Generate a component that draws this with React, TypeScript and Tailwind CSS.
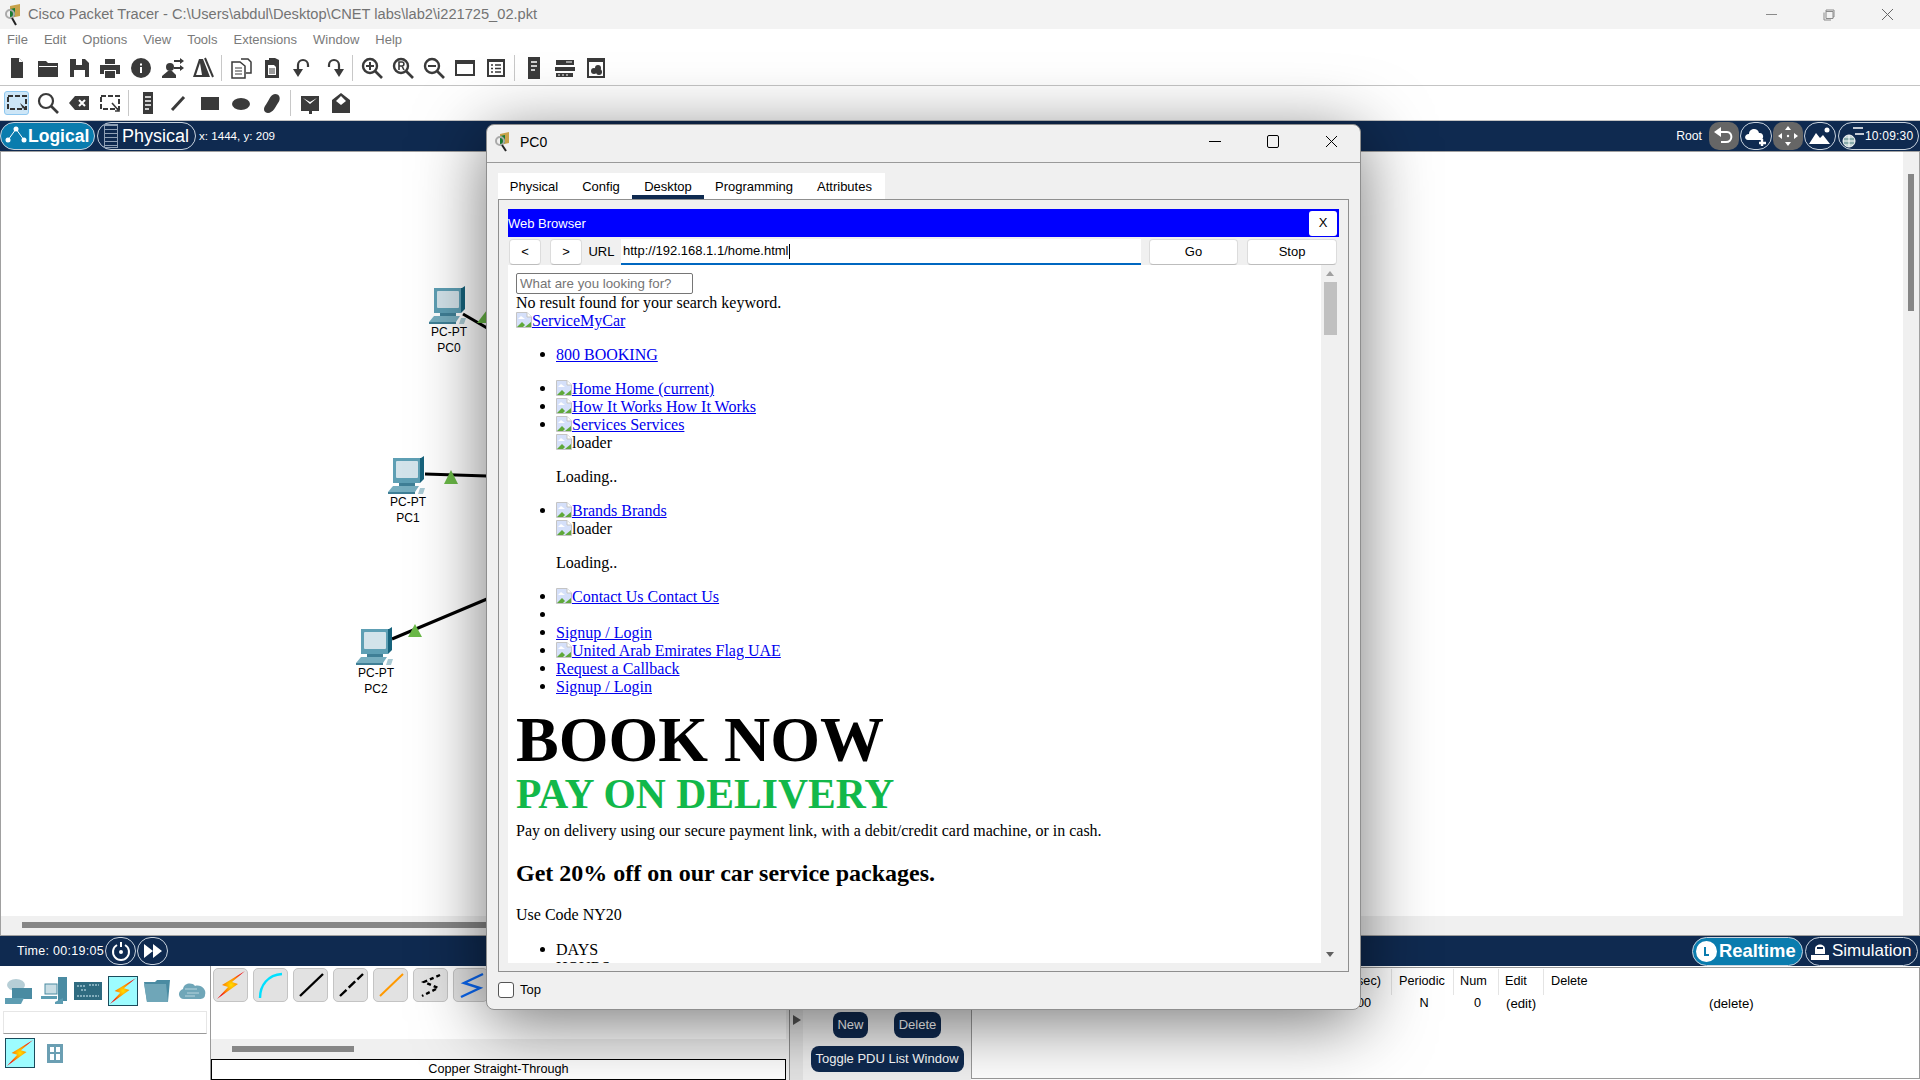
import React from 'react';

const NAVY = 'bg-[#0f2a50]';

// broken image marker, same as the browser draws
const Broken = () => (
    <svg width="16" height="16" viewBox="0 0 16 16" className="inline-block align-[-2px]">
        <path d="M0.5 0.5H11L15.5 5V15.5H0.5Z" fill="#d5e0fa" stroke="#c4c4c4" />
        <path d="M11 0.5V5H15.5" fill="#fff" stroke="#c4c4c4" />
        <path d="M1 15L6 10L9 13L7 15Z" fill="#5fa83a" />
        <path d="M9 15L15 10V15Z" fill="#5fa83a" />
        <path d="M2 7L5 4L9 7Z" fill="#fff" />
    </svg>
);

const A = ({ children }: { children: React.ReactNode }) => (
    <a className="text-[#0000ee] underline">{children}</a>
);

const Li = ({ children }: { children: React.ReactNode }) => (
    <li className="relative h-[18px] whitespace-nowrap">
        <span className="absolute left-[-16px] top-[6px] w-[5px] h-[5px] rounded-full bg-black" />
        {children}
    </li>
);

const ToolIcon = ({ children, vb = '0 0 24 24' }: { children: React.ReactNode; vb?: string }) => (
    <div className="w-[31px] flex justify-center shrink-0">
        <svg width="24" height="24" viewBox={vb} fill="#3a3a3a">
            {children}
        </svg>
    </div>
);

const Sep = () => <div className="w-px h-[26px] bg-[#c8c8c8] mx-[3px] shrink-0" />;

const Bolt = ({ size = 30 }: { size?: number }) => (
    <svg width={size} height={size} viewBox="0 0 30 30">
        <defs>
            <radialGradient id="boltFill" cx="50%" cy="50%" r="50%">
                <stop offset="0%" stopColor="#ffe000" />
                <stop offset="60%" stopColor="#ff7a00" />
                <stop offset="100%" stopColor="#f01010" />
            </radialGradient>
        </defs>
        <path d="M29 1L16 12L22 14L1 29L12 17L6 15Z" fill="url(#boltFill)" />
    </svg>
);

const PcIcon = () => (
    <svg width="40" height="40" viewBox="0 0 40 40">
        <path d="M5 2H33L36 0V23L32 27H5Z" fill="#17637c" />
        <path d="M5 2H32V27H5Z" fill="#5e9fb4" />
        <rect x="8" y="5" width="22" height="17" rx="1" fill="#d3e3ea" />
        <path d="M11 27H27V30H11Z" fill="#3f7f96" />
        <path d="M5 30H31L27 36H0Z" fill="#77aebf" />
        <path d="M0 36H27V38H0Z" fill="#3f7f96" />
        <path d="M32 32H37L35 38H30Z" fill="#a8c9d3" />
    </svg>
);

const PcNode = ({ x, y, name }: { x: number; y: number; name: string }) => (
    <div className="absolute flex flex-col items-center w-[60px] text-[12px] leading-[16px] text-black" style={{ left: x, top: y }}>
        <PcIcon />
        <span className="-mt-[2px]">PC-PT</span>
        <span>{name}</span>
    </div>
);

const Links = () => (
    <svg className="absolute left-0 top-0" width="486" height="784">
        <path d="M462 162L486 176" stroke="#000" strokeWidth="3" />
        <path d="M424 322L486 324" stroke="#000" strokeWidth="3" />
        <path d="M391 487L486 447" stroke="#000" strokeWidth="3" />
        <path d="M476 171L486 158L486 171Z" fill="#6ab947" />
        <path d="M443 332L450 318L457 332Z" fill="#6ab947" />
        <path d="M407 485L414 472L421 485Z" fill="#6ab947" />
    </svg>
);

const PillButton = ({ active, children }: { active?: boolean; children: React.ReactNode }) => (
    <div className={`h-[28px] rounded-full border border-[#c9d3de] flex items-center ${active ? 'bg-[#0a7cae]' : ''}`}>{children}</div>
);

const CableBtn = ({ children }: { children: React.ReactNode }) => (
    <div className="w-[35px] h-[34px] rounded-[5px] bg-[#e2e2e2] border border-[#c4c4c4] flex items-center justify-center shrink-0">
        <svg width="30" height="30" viewBox="0 0 30 30">{children}</svg>
    </div>
);

const DevIcon = ({ children, active }: { children: React.ReactNode; active?: boolean }) => (
    <div className={`w-[30px] h-[30px] shrink-0 flex items-center justify-center ${active ? 'bg-[#9dfcff] border border-[#1b4b5c]' : ''}`}>{children}</div>
);

const BrowserBtn = ({ w, children }: { w: string; children: React.ReactNode }) => (
    <div className={`${w} h-[26px] bg-white rounded-[4px] border border-[#dcdcdc] border-b-[#bdbdbd] flex items-center justify-center text-[13px] text-black`}>{children}</div>
);

const WebPage = () => (
    <div className="flex-1 bg-white overflow-hidden h-full pl-[8px] pt-[8px] font-['Liberation_Serif',serif] text-[16px] leading-[18px] text-black">
        <div className="w-[177px] h-[21px] border border-[#767676] rounded-[2px] px-[3px] font-['Liberation_Sans',sans-serif] text-[13.3px] leading-[19px] text-[#757575]">What are you looking for?</div>
        <div>No result found for your search keyword.</div>
        <div><A><Broken />ServiceMyCar</A></div>
        <ul className="pl-[40px] mt-[16px]">
            <Li><A>800 BOOKING</A></Li>
        </ul>
        <ul className="pl-[40px] mt-[16px]">
            <Li><A><Broken />Home Home (current)</A></Li>
            <Li><A><Broken />How It Works How It Works</A></Li>
            <Li><A><Broken />Services Services</A></Li>
            <div><Broken />loader</div>
            <p className="my-[16px]">Loading..</p>
            <Li><A><Broken />Brands Brands</A></Li>
            <div><Broken />loader</div>
            <p className="my-[16px]">Loading..</p>
            <Li><A><Broken />Contact Us Contact Us</A></Li>
            <Li>&nbsp;</Li>
            <Li><A>Signup / Login</A></Li>
            <Li><A><Broken />United Arab Emirates Flag UAE</A></Li>
            <Li><A>Request a Callback</A></Li>
            <Li><A>Signup / Login</A></Li>
        </ul>
        <h1 className="mt-[6px] text-[64px] leading-[76px] font-bold whitespace-nowrap">BOOK NOW</h1>
        <h2 className="-mt-[8px] text-[41.6px] leading-[48px] font-bold text-[#12b84a] whitespace-nowrap">PAY ON DELIVERY</h2>
        <p className="mt-[4px]">Pay on delivery using our secure payment link, with a debit/credit card machine, or in cash.</p>
        <h3 className="mt-[21px] text-[24px] leading-[24px] font-bold">Get 20% off on our car service packages.</h3>
        <p className="mt-[21px]">Use Code NY20</p>
        <ul className="pl-[40px] mt-[17px]">
            <Li>DAYS</Li>
            <Li>HOURS</Li>
        </ul>
    </div>
);

const TABS = [
    ['Physical', 'w-[72px]'],
    ['Config', 'w-[62px]'],
    ['Desktop', 'w-[72px]'],
    ['Programming', 'w-[100px]'],
    ['Attributes', 'w-[81px]'],
];

const PcWindow = () => (
    <div className="absolute left-[486px] top-[124px] w-[875px] h-[886px] bg-[#f0f0f0] rounded-[8px] border border-[#8e8e8e] shadow-[0_12px_70px_rgba(0,0,0,0.55)] flex flex-col">
        <div className="h-[38px] flex items-center border-b border-[#9a9a9a] pl-[8px] pb-[3px] shrink-0">
            <svg width="20" height="22" viewBox="0 0 20 22" className="shrink-0">
                <path d="M5 3L14 1V12L5 14Z" fill="#c8a24a" />
                <path d="M5 5L10 4V12L5 14Z" fill="#1a7a30" />
                <circle cx="5" cy="10" r="4" fill="none" stroke="#aaa" strokeWidth="2" />
                <path d="M7 14L11 20" stroke="#222" strokeWidth="2" />
            </svg>
            <span className="ml-[5px] text-[14px] text-black">PC0</span>
            <div className="ml-auto flex items-center pb-[1px]">
                <div className="w-[58px] flex justify-center"><div className="w-[12px] h-px bg-black" /></div>
                <div className="w-[58px] flex justify-center"><div className="w-[12px] h-[13px] border border-black rounded-[2px]" /></div>
                <div className="w-[58px] flex justify-center">
                    <svg width="13" height="13" viewBox="0 0 13 13"><path d="M1 1L12 12M12 1L1 12" stroke="#000" /></svg>
                </div>
            </div>
        </div>
        <div className="flex-1 px-[11px] pt-[10px] flex flex-col min-h-0">
            <div className="self-start bg-white h-[26px] flex items-stretch text-[13px] text-black">
                {TABS.map(([label, w]) => (
                    <div key={label} className={`${w} flex items-center justify-center ${label === 'Desktop' ? 'border-b-[4px] border-[#0f2a50] pt-[6px]' : 'pt-[2px]'}`}>{label}</div>
                ))}
            </div>
            <div className="h-[773px] border border-[#8f8f8f] px-[9px] pt-[9px] flex flex-col shrink-0">
                <div className="h-[28px] bg-[#0000ff] flex items-center justify-between pr-[2px] shrink-0">
                    <span className="mt-[2px] text-[13px] text-white">Web Browser</span>
                    <div className="w-[28px] h-[25px] bg-white rounded-[3px] flex items-center justify-center text-[13px] text-black">X</div>
                </div>
                <div className="h-[28px] flex items-center pl-[1px] pr-[2px] pt-[2px] shrink-0">
                    <BrowserBtn w="w-[32px]">&lt;</BrowserBtn>
                    <div className="w-[9px]" />
                    <BrowserBtn w="w-[32px]">&gt;</BrowserBtn>
                    <span className="w-[39px] text-center text-[13px] text-black">URL</span>
                    <div className="w-[520px] h-[26px] bg-white border-b-2 border-[#0067c0] flex items-center pl-[2px] text-[13px] text-black">
                        http://192.168.1.1/home.html<span className="w-px h-[15px] bg-black" />
                    </div>
                    <div className="w-[8px]" />
                    <BrowserBtn w="w-[89px]">Go</BrowserBtn>
                    <div className="w-[9px]" />
                    <BrowserBtn w="w-[90px]">Stop</BrowserBtn>
                </div>
                <div className="flex h-[698px] shrink-0">
                    <WebPage />
                    <div className="w-[18px] bg-[#f0f0f0] flex flex-col items-center shrink-0">
                        <div className="mt-[6px] w-0 h-0 border-x-[4px] border-x-transparent border-b-[5px] border-b-[#a0a0a0]" />
                        <div className="mt-[6px] w-[13px] h-[53px] bg-[#c0c0c0]" />
                        <div className="mt-auto mb-[6px] w-0 h-0 border-x-[4px] border-x-transparent border-t-[5px] border-t-[#606060]" />
                    </div>
                </div>
            </div>
            <div className="flex items-center mt-[8px] text-[13px] text-black">
                <div className="w-[16px] h-[16px] border border-[#555] rounded-[3px] bg-white" />
                <span className="ml-[6px]">Top</span>
            </div>
        </div>
    </div>
);

const App = () => {
    return (
        <div className="relative w-[1920px] h-[1080px] overflow-hidden bg-white font-['Liberation_Sans',sans-serif] flex flex-col">
            {/* title */}
            <div className="h-[29px] bg-[#f3f3f3] flex items-center shrink-0 pl-[4px]">
                <svg width="20" height="24" viewBox="0 0 20 24" className="shrink-0">
                    <path d="M6 3L16 1V13L6 15Z" fill="#c8a24a" />
                    <path d="M6 6L11 5V13L6 15Z" fill="#1a7a30" />
                    <circle cx="6" cy="11" r="4" fill="none" stroke="#aaa" strokeWidth="2" />
                    <path d="M8 15L12 22" stroke="#222" strokeWidth="2" />
                </svg>
                <span className="ml-[4px] text-[14.65px] text-[#737373] whitespace-nowrap">Cisco Packet Tracer - C:\Users\abdul\Desktop\CNET labs\lab2\i221725_02.pkt</span>
                <div className="ml-auto flex items-center text-[#8a8a8a] pr-[4px]">
                    <div className="w-[58px] flex justify-center"><div className="w-[11px] h-px bg-[#8a8a8a]" /></div>
                    <div className="w-[58px] flex justify-center">
                        <svg width="12" height="12" viewBox="0 0 12 12" fill="none" stroke="#8a8a8a"><path d="M3 2.5H10V9.5H3ZM3 2.5V1H11V8H10M1 3.5V11H8" /></svg>
                    </div>
                    <div className="w-[58px] flex justify-center">
                        <svg width="13" height="13" viewBox="0 0 13 13"><path d="M1 1L12 12M12 1L1 12" stroke="#666" /></svg>
                    </div>
                </div>
            </div>
            {/* menu */}
            <div className="h-[21px] bg-white flex items-center shrink-0 pl-[7px] gap-[16px] text-[13px] text-[#7a7a7a]">
                {['File', 'Edit', 'Options', 'View', 'Tools', 'Extensions', 'Window', 'Help'].map((m) => (
                    <span key={m}>{m}</span>
                ))}
            </div>
            {/* main toolbar */}
            <div className="h-[36px] bg-white border-b border-[#c4c4c4] flex items-center shrink-0 pl-[1px]">
                <ToolIcon><path d="M6 2H14L18 6V22H6Z" /><path d="M14 2V6H18" fill="#fff" /></ToolIcon>
                <ToolIcon><path d="M2 5H10L12 7H22V21H2ZM3 10V11H21V10Z" fillRule="evenodd" /></ToolIcon>
                <ToolIcon><path d="M3 3H18L22 7V21H3ZM9 3V9H15V3ZM7 14V21H18V14Z" fillRule="evenodd" /></ToolIcon>
                <ToolIcon><path d="M7 3H17V8H7ZM2 9H22V18H18V14H6V18H2ZM7 15H17V22H7Z" /></ToolIcon>
                <ToolIcon><circle cx="12" cy="12" r="10" /><rect x="11" y="11" width="2" height="6" fill="#fff" /><rect x="11" y="7.5" width="2" height="2" fill="#fff" /></ToolIcon>
                <ToolIcon><circle cx="10" cy="11" r="4" /><path d="M2 22V20L8 15H12L16 19V22ZM14 4H20V2L24 5L20 8V6H14ZM14 11H20V9L24 12L20 15V13H14Z" /></ToolIcon>
                <ToolIcon><path d="M8 3H12L19 21H2ZM9 7L5 19H11Z" fillRule="evenodd" /><path d="M14 2L22 21" stroke="#3a3a3a" strokeWidth="2" /></ToolIcon>
                <Sep />
                <ToolIcon><path d="M12 3H19L22 6V17H17" fill="none" stroke="#3a3a3a" strokeWidth="1.5" /><path d="M3 6H11L16 10V22H3Z" fill="#fff" stroke="#3a3a3a" strokeWidth="1.5" /><path d="M6 12H13M6 15H13M6 18H13" stroke="#3a3a3a" /></ToolIcon>
                <ToolIcon><path d="M5 4H9V2H15L19 4V22H5Z" /><path d="M8 9H14L16 11V19H8Z" fill="#fff" /><path d="M9 13H15M9 15H15M9 17H15" stroke="#3a3a3a" /></ToolIcon>
                <ToolIcon><path d="M7 14V9A5 5 0 0 1 17 9V11" fill="none" stroke="#3a3a3a" strokeWidth="2.2" /><path d="M2 13H12L7 21Z" /></ToolIcon>
                <ToolIcon><path d="M17 14V9A5 5 0 0 0 7 9V11" fill="none" stroke="#3a3a3a" strokeWidth="2.2" /><path d="M12 13H22L17 21Z" /></ToolIcon>
                <Sep />
                <ToolIcon><circle cx="10" cy="10" r="7" fill="none" stroke="#3a3a3a" strokeWidth="2.4" /><path d="M15 15L22 22" stroke="#3a3a3a" strokeWidth="2.6" /><path d="M6 10H14M10 6V14" stroke="#3a3a3a" strokeWidth="2" /></ToolIcon>
                <ToolIcon><circle cx="10" cy="10" r="7" fill="none" stroke="#3a3a3a" strokeWidth="2.4" /><path d="M15 15L22 22" stroke="#3a3a3a" strokeWidth="2.6" /><path d="M8 14V6H11C13.5 6 13.5 10 11 10H8M11 10L13 14" fill="none" stroke="#3a3a3a" strokeWidth="1.6" /></ToolIcon>
                <ToolIcon><circle cx="10" cy="10" r="7" fill="none" stroke="#3a3a3a" strokeWidth="2.4" /><path d="M15 15L22 22" stroke="#3a3a3a" strokeWidth="2.6" /><path d="M6 10H14" stroke="#3a3a3a" strokeWidth="2" /></ToolIcon>
                <ToolIcon><path d="M2 4H22V20H2ZM4 8V18H20V8Z" fillRule="evenodd" /></ToolIcon>
                <ToolIcon><path d="M3 3H21V21H3ZM5 6V19H19V6Z" fillRule="evenodd" /><path d="M7 9H9M11 9H17M7 12.5H9M11 12.5H17M7 16H9M11 16H17" stroke="#3a3a3a" strokeWidth="1.6" /></ToolIcon>
                <Sep />
                <ToolIcon><path d="M6 1H18V23H6Z" /><path d="M9 6H15M9 10H15M9 14H13" stroke="#fff" strokeWidth="1.5" /></ToolIcon>
                <ToolIcon><path d="M3 4H21V9H3ZM2 11H22V15H2ZM3 17H20V21H3Z" /><path d="M13 6H19M5 19H7M9 19H11M13 19H15" stroke="#fff" /></ToolIcon>
                <ToolIcon><path d="M3 2H21V22H3ZM5 6V20H19V6Z" fillRule="evenodd" /><circle cx="10" cy="15" r="3" /><circle cx="14" cy="12" r="3" /><circle cx="15" cy="16" r="3" /></ToolIcon>
            </div>
            {/* secondary toolbar */}
            <div className="h-[35px] bg-white border-b border-[#c4c4c4] flex items-center shrink-0 pl-[1px]">
                <div className="w-[31px] flex justify-center shrink-0">
                    <div className="w-[25px] h-[24px] bg-[#cde6f7] border border-[#90c8f0] rounded-[3px] flex items-center justify-center">
                        <svg width="20" height="18" viewBox="0 0 20 18"><rect x="1" y="2" width="18" height="13" fill="none" stroke="#333" strokeWidth="2" strokeDasharray="5 2" /><path d="M13 9L19 14L16 14.5L17 17Z" fill="#333" /></svg>
                    </div>
                </div>
                <ToolIcon><circle cx="10" cy="10" r="7" fill="none" stroke="#3a3a3a" strokeWidth="2.2" /><path d="M15 15L22 22" stroke="#3a3a3a" strokeWidth="2.6" /></ToolIcon>
                <ToolIcon><path d="M8 5H22V19H8L2 12Z" /><path d="M12 9L18 15M18 9L12 15" stroke="#fff" strokeWidth="2" /></ToolIcon>
                <ToolIcon><rect x="3" y="5" width="18" height="13" fill="none" stroke="#3a3a3a" strokeWidth="2" strokeDasharray="5 2" /><path d="M14 12L21 20M21 16V20H17" fill="none" stroke="#3a3a3a" strokeWidth="1.6" /></ToolIcon>
                <Sep />
                <ToolIcon><path d="M7 1H17V23H7Z" /><path d="M9 6H15M9 10H15M9 14H15M9 18H13" stroke="#fff" strokeWidth="1.4" /></ToolIcon>
                <ToolIcon><path d="M5 19L17 6" stroke="#3a3a3a" strokeWidth="3" /></ToolIcon>
                <ToolIcon><rect x="3" y="6" width="18" height="13" /></ToolIcon>
                <ToolIcon><ellipse cx="12" cy="13" rx="9" ry="6" /></ToolIcon>
                <ToolIcon><path d="M15 3C20 3 21 8 18 12C16 15 13 22 8 22C4 22 3 18 5 15C8 12 10 3 15 3Z" /></ToolIcon>
                <Sep />
                <ToolIcon><path d="M3 5H21V20H14V23H11V20H3ZM5 7L12 13L19 7L12 11Z" fillRule="evenodd" /></ToolIcon>
                <ToolIcon><path d="M12 2L21 9V22H3V9ZM12 5L7 10L12 14L17 10Z" fillRule="evenodd" /></ToolIcon>
            </div>
            {/* logical bar */}
            <div className={`h-[30px] ${NAVY} flex items-center shrink-0 text-white`}>
                <div className="w-[95px] shrink-0">
                    <PillButton active>
                        <svg width="24" height="24" viewBox="0 0 24 24" className="ml-[3px] shrink-0" fill="#fff"><circle cx="12" cy="5" r="2.5" /><circle cx="4" cy="16" r="2.5" /><circle cx="20" cy="16" r="2.5" /><path d="M12 5L4 16M12 5L20 16" stroke="#fff" /></svg>
                        <span className="text-[17.5px] font-bold">Logical</span>
                    </PillButton>
                </div>
                <div className="w-[99px] ml-[2px] shrink-0">
                    <PillButton>
                        <div className="ml-[6px] w-[14px] h-[24px] border border-[#8fa0b5] bg-[linear-gradient(#8fa0b5_1px,transparent_1px)] bg-[length:100%_4px]" />
                        <span className="ml-[4px] text-[18px]">Physical</span>
                    </PillButton>
                </div>
                <span className="ml-[3px] text-[11.6px]">x: 1444, y: 209</span>
                <span className="ml-auto text-[12.2px]">Root</span>
                <div className="ml-[7px] w-[30px] h-[28px] rounded-[10px] bg-[#666] flex items-center justify-center">
                    <svg width="22" height="20" viewBox="0 0 22 20" fill="none" stroke="#fff" strokeWidth="2"><path d="M5 6H14C20 6 20 16 13 16H8" /><path d="M1 6L8 1V11Z" fill="#fff" stroke="none" /></svg>
                </div>
                <div className="ml-[1px] w-[32px] h-[28px] rounded-full border border-[#c9d3de] flex items-center justify-center">
                    <svg width="26" height="22" viewBox="0 0 26 22" fill="#fff"><path d="M5 15C1 15 1 9 6 9C6 3 15 2 16 8C20 7 22 13 18 15Z" /><path d="M19 14V21M16 18H23" stroke="#fff" strokeWidth="2.4" /></svg>
                </div>
                <div className="ml-[1px] w-[30px] h-[28px] rounded-[10px] bg-[#666] flex items-center justify-center">
                    <svg width="24" height="24" viewBox="0 0 24 24" fill="#fff"><path d="M12 2L15 6H9ZM12 22L15 18H9ZM2 12L6 9V15ZM22 12L18 9V15Z" /><circle cx="12" cy="12" r="1.2" /></svg>
                </div>
                <div className="ml-[1px] w-[32px] h-[28px] rounded-full border border-[#c9d3de] flex items-center justify-center">
                    <svg width="24" height="22" viewBox="0 0 24 22" fill="#fff"><path d="M1 19L8 8L12 13L15 10L22 19Z" /><circle cx="19" cy="5" r="2.5" /></svg>
                </div>
                <div className="ml-[2px] mr-[1px] w-[81px] h-[28px] rounded-full border border-[#c9d3de] flex items-center">
                    <svg width="24" height="26" viewBox="0 0 24 26" className="shrink-0 ml-[2px]" fill="none" stroke="#fff"><circle cx="8" cy="18" r="6" fill="#8aa" /><path d="M2 18H14M8 12V24M4 14H12M4 22H12" /><path d="M12 5H22M14 11H23" strokeWidth="1.6" /></svg>
                    <span className="text-[12px] tracking-[0.2px]">10:09:30</span>
                </div>
            </div>
            {/* canvas */}
            <div className="h-[785px] border-t border-[#a0a0a0] border-x border-x-[#a0a0a0] relative shrink-0 flex flex-col">
                <div className="flex-1 relative flex justify-end">
                    <Links />
                    <PcNode x={418} y={134} name="PC0" />
                    <PcNode x={377} y={304} name="PC1" />
                    <PcNode x={345} y={475} name="PC2" />
                    <div className="w-[16px] h-full bg-[#f0f0f0] flex justify-center">
                        <div className="mt-[22px] w-[6px] h-[137px] bg-[#868686]" />
                    </div>
                </div>
                <div className="h-[20px] bg-[#f0f0f0] border-b border-[#a0a0a0] pl-[21px] pt-[6px] shrink-0">
                    <div className="w-[800px] h-[6px] bg-[#868686]" />
                </div>
            </div>
            {/* time bar */}
            <div className={`h-[30px] ${NAVY} flex items-center shrink-0 text-white`}>
                <span className="ml-[17px] text-[12.5px] tracking-[0.3px]">Time: 00:19:05</span>
                <div className="ml-[1px] w-[31px] h-[28px] rounded-full border border-[#c9d3de] flex items-center justify-center">
                    <svg width="20" height="20" viewBox="0 0 20 20" fill="none" stroke="#fff" strokeWidth="2"><path d="M6 4A8 8 0 1 0 14 4" /><path d="M10 1V6" /><circle cx="10" cy="11" r="1" fill="#fff" /></svg>
                </div>
                <div className="ml-[1px] w-[31px] h-[28px] rounded-full border border-[#c9d3de] flex items-center justify-center">
                    <svg width="20" height="16" viewBox="0 0 20 16" fill="#fff"><path d="M1 1L10 8L1 15ZM10 1L19 8L10 15Z" /></svg>
                </div>
                <div className="ml-auto w-[111px] h-[29px] rounded-full border border-[#c9d3de] bg-[#0a7cae] flex items-center">
                    <div className="ml-[3px] w-[21px] h-[21px] rounded-full bg-white flex items-center justify-center">
                        <div className="w-[5px] h-[9px] border-l-2 border-b-2 border-[#0a7cae]" />
                    </div>
                    <span className="ml-[2px] text-[18.4px] font-bold">Realtime</span>
                </div>
                <div className="ml-[2px] mr-[2px] w-[113px] h-[29px] rounded-full border border-[#c9d3de] flex items-center">
                    <svg width="22" height="22" viewBox="0 0 22 22" fill="#fff" className="ml-[3px] shrink-0"><path d="M6 9C6 3 16 3 16 9V14H6ZM8 9H14V7H8Z" fillRule="evenodd" /><path d="M2 15H20V20H2Z" /></svg>
                    <span className="ml-[1px] text-[17px]">Simulation</span>
                </div>
            </div>
            {/* bottom */}
            <div className="flex-1 flex bg-white min-h-0">
                <div className="w-[210px] shrink-0 flex flex-col">
                    <div className="flex items-center h-[45px] pl-[4px] pt-[4px] gap-[4.5px]">
                        <DevIcon><svg width="30" height="30" viewBox="0 0 30 30"><ellipse cx="12" cy="9" rx="9" ry="6" fill="#b6ced6" /><rect x="8" y="12" width="20" height="11" fill="#4a8ba2" /><path d="M1 22H20L17 28H1Z" fill="#5d9db2" /></svg></DevIcon>
                        <DevIcon><svg width="30" height="30" viewBox="0 0 30 30"><rect x="19" y="1" width="9" height="24" fill="#4a8ba2" /><rect x="6" y="8" width="12" height="10" fill="#c8dde4" stroke="#4a8ba2" /><path d="M2 20H18V23H2ZM16 26L24 22V28H16Z" fill="#5d9db2" /></svg></DevIcon>
                        <DevIcon><svg width="30" height="30" viewBox="0 0 30 30"><rect x="1" y="6" width="28" height="18" fill="#2f6b80" /><path d="M4 10H12M16 9H26M4 20H26M8 14H14" stroke="#9fc4cf" strokeWidth="1.4" strokeDasharray="2 1" /></svg></DevIcon>
                        <DevIcon active><Bolt size={28} /></DevIcon>
                        <DevIcon><svg width="30" height="30" viewBox="0 0 30 30"><path d="M2 6H13L15 4H28L26 26H5Z" fill="#4a8ba2" /><path d="M2 8H24L26 26H5Z" fill="#6fa6b8" /></svg></DevIcon>
                        <DevIcon><svg width="30" height="30" viewBox="0 0 30 30"><path d="M7 23C1 23 0 15 6 13C7 7 15 6 18 10C24 8 30 14 28 19C28 22 25 23 23 23Z" fill="#6fa6b8" /><path d="M8 13H20M10 17H22M8 20H18" stroke="#b9d5de" /></svg></DevIcon>
                    </div>
                    <div className="mx-[3px] h-[23px] bg-white border border-[#e6e6e6] border-b-[#9a9a9a] shrink-0" />
                    <div className="flex items-center pl-[5px] mt-[4px] gap-[12px]">
                        <DevIcon active><Bolt size={28} /></DevIcon>
                        <div className="w-[16px] h-[19px] bg-[#6b9fb3] grid grid-cols-2 gap-[2px] p-[3px]">
                            <div className="bg-white" /><div className="bg-white" /><div className="bg-white" /><div className="bg-white" />
                        </div>
                    </div>
                </div>
                <div className="w-[576px] shrink-0 flex flex-col border-l border-[#9a9a9a]">
                    <div className="h-[73px] pl-[2px] pt-[2px] flex gap-[5px] overflow-hidden shrink-0">
                        <CableBtn><Bolt size={30} /></CableBtn>
                        <CableBtn><path d="M4 28C4 15 12 5 26 4" fill="none" stroke="#00e0ff" strokeWidth="2.4" /></CableBtn>
                        <CableBtn><path d="M4 26L27 4" stroke="#000" strokeWidth="2.4" /></CableBtn>
                        <CableBtn><path d="M4 26L27 4" stroke="#000" strokeWidth="2.4" strokeDasharray="9 3" /></CableBtn>
                        <CableBtn><path d="M4 26L27 4" stroke="#ff9900" strokeWidth="2" /></CableBtn>
                        <CableBtn><path d="M24 5L8 12L22 18L6 26" fill="none" stroke="#000" strokeWidth="2.4" strokeDasharray="4 3" /></CableBtn>
                        <CableBtn><path d="M27 4L8 13L24 18L5 27" fill="none" stroke="#0a66f0" strokeWidth="2.4" /></CableBtn>
                    </div>
                    <div className="h-[20px] bg-[#f0f0f0] pl-[21px] pt-[7px] shrink-0">
                        <div className="w-[122px] h-[6px] bg-[#868686]" />
                    </div>
                    <div className="h-[21px] border border-black flex items-center justify-center text-[12.7px] text-black shrink-0">Copper Straight-Through</div>
                </div>
                <div className="w-[185px] shrink-0 flex bg-[#f0f0f0]">
                    <div className="ml-[3px] w-[14px] bg-[#e4e4e4] border-l border-[#8f8f8f] flex items-start justify-center pt-[49px]">
                        <div className="w-0 h-0 border-y-[5px] border-y-transparent border-l-[8px] border-l-[#555]" />
                    </div>
                    <div className="flex-1 flex flex-col items-center pt-[46px] text-[13px] text-white">
                        <div className="flex gap-[26px]">
                            <div className={`w-[35px] h-[26px] rounded-[8px] ${NAVY} flex items-center justify-center`}>New</div>
                            <div className={`w-[47px] h-[26px] rounded-[8px] ${NAVY} flex items-center justify-center`}>Delete</div>
                        </div>
                        <div className={`mt-[8px] w-[153px] h-[26px] rounded-[8px] ${NAVY} flex items-center justify-center whitespace-nowrap`}>Toggle PDU List Window</div>
                    </div>
                </div>
                <div className="flex-1 h-[112px] mt-[1px] border border-[#9a9a9a] bg-white text-[12.7px] text-black">
                    <div className="flex h-[27px] items-center pl-[385px] pt-[1px]">
                        <span className="w-[34px] whitespace-nowrap">sec)</span>
                        <span className="w-[62px] pl-[7px] border-l border-[#e4e4e4] h-full flex items-center">Periodic</span>
                        <span className="w-[45px] pl-[6px] border-l border-[#e4e4e4] h-full flex items-center">Num</span>
                        <span className="w-[45px] pl-[6px] border-l border-[#e4e4e4] h-full flex items-center">Edit</span>
                        <span className="pl-[7px] border-l border-[#e4e4e4] h-full flex items-center">Delete</span>
                    </div>
                    <div className="flex h-[16px] mt-[1px] items-center pl-[385px]">
                        <span className="w-[34px]">00</span>
                        <span className="w-[62px] text-center pl-[4px]">N</span>
                        <span className="w-[45px] text-center pl-[4px]">0</span>
                        <span className="w-[45px] pl-[8px] whitespace-nowrap text-[13.2px]">(edit)</span>
                        <span className="pl-[166px] text-[13.2px]">(delete)</span>
                    </div>
                </div>
            </div>
            <PcWindow />
        </div>
    );
};

export default App;
